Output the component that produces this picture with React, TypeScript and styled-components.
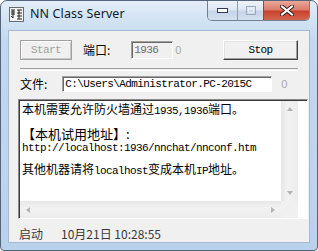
import styled, { createGlobalStyle } from "styled-components";

const Global = createGlobalStyle`
  html, body { margin: 0; padding: 0; background: #ffffff; overflow: hidden; }
  #root { width: 318px; height: 251px; }
`;

const cjk = `"Noto Sans CJK SC", "Noto Sans", sans-serif`;
const mono = `"Liberation Mono", "Noto Sans CJK SC", monospace`;

const Frame = styled.div`
  box-sizing: border-box;
  width: 318px;
  height: 251px;
  border: 1px solid #55657a;
  border-radius: 7px 7px 4px 4px;
  background: linear-gradient(180deg, #e3edf8 0px, #d3e3f3 18px, #c3d8ee 40px, #b9d2eb 100%);
  display: flex;
  flex-direction: column;
  overflow: hidden;
`;

const TitleBar = styled.div`
  height: 29px;
  display: flex;
  align-items: flex-start;
  padding-left: 8px;
`;

const AppIcon = styled.svg`
  margin-top: 6px;
  flex: none;
`;

const Title = styled.div`
  margin-left: 6px;
  margin-top: 5px;
  font-family: "Noto Sans", sans-serif;
  font-size: 12.5px;
  color: #0c1c30;
  line-height: 16px;
  letter-spacing: 0.1px;
`;

const Caption = styled.div`
  margin-left: auto;
  margin-right: 7px;
  display: flex;
  height: 19px;
  border: 1px solid #6f7f94;
  border-top: none;
  border-radius: 0 0 5px 5px;
  overflow: hidden;
`;

const CapBtn = styled.div<{ $w: number; $close?: boolean }>`
  width: ${(p) => p.$w}px;
  height: 19px;
  display: flex;
  align-items: center;
  justify-content: center;
  box-sizing: border-box;
  border-left: ${(p) => (p.$close ? "1px solid #8c4a44" : "1px solid #8d9db1")};
  background: ${(p) =>
    p.$close
      ? "linear-gradient(180deg, #e9a99c 0%, #dd7d6b 45%, #c8432f 55%, #d2664e 100%)"
      : "linear-gradient(180deg, #eef3fa 0%, #dde7f3 45%, #c6d5e7 55%, #d3e0ef 100%)"};
  &:first-child { border-left: none; }
`;

const Client = styled.div`
  flex: 1;
  margin: 0 7px 7px 7px;
  border: 1px solid #a4bad3;
  background: #f0f0f0;
  display: flex;
  flex-direction: column;
  font-family: ${cjk};
  font-size: 12px;
  color: #000;
`;

const Row = styled.div<{ $top: number; $h: number }>`
  display: flex;
  align-items: center;
  margin-top: ${(p) => p.$top}px;
  height: ${(p) => p.$h}px;
  padding: 0 11px;
`;

const Button = styled.div<{ $w: number; $disabled?: boolean }>`
  box-sizing: border-box;
  width: ${(p) => p.$w}px;
  height: 20px;
  display: flex;
  align-items: center;
  justify-content: center;
  font-family: ${mono};
  font-size: 11px;
  letter-spacing: -0.6px;
  background: #f0f0f0;
  color: ${(p) => (p.$disabled ? "#a0a0a0" : "#000")};
  border: 1px solid;
  border-color: ${(p) =>
    p.$disabled ? "#a0a0a0 #a0a0a0 #a0a0a0 #a0a0a0" : "#ffffff #404040 #404040 #ffffff"};
  box-shadow: ${(p) =>
    p.$disabled ? "inset 1px 1px #ffffff, inset -1px -1px #c8c8c8" : "inset -1px -1px #a0a0a0, inset 1px 1px #e3e3e3"};
`;

const Label = styled.span<{ $left?: number }>`
  margin-left: ${(p) => p.$left ?? 0}px;
  line-height: 14px;
`;

const Field = styled.div<{ $w: number; $h: number; $left: number; $disabled?: boolean }>`
  box-sizing: border-box;
  width: ${(p) => p.$w}px;
  height: ${(p) => p.$h}px;
  margin-left: ${(p) => p.$left}px;
  border: 1px solid;
  border-color: #a0a0a0 #ffffff #ffffff #a0a0a0;
  box-shadow: inset 1px 1px #696969;
  background: ${(p) => (p.$disabled ? "#f0f0f0" : "#ffffff")};
  color: ${(p) => (p.$disabled ? "#6d6d6d" : "#000")};
  font-family: ${mono};
  font-size: 11px;
  letter-spacing: -0.6px;
  padding-left: 2px;
  display: flex;
  align-items: center;
  white-space: nowrap;
  overflow: hidden;
`;

const Ghost = styled.span<{ $left: number }>`
  margin-left: ${(p) => p.$left}px;
  color: #a8a8a8;
  font-family: "Liberation Sans", sans-serif;
  font-size: 11px;
`;

const Separator = styled.div`
  margin: 8px 11px 0 11px;
  height: 1px;
  border-top: 1px solid #a0a0a0;
  border-bottom: 1px solid #ffffff;
`;

const LogBox = styled.div`
  margin: 7px 0 0 9px;
  width: 290px;
  height: 120px;
  box-sizing: border-box;
  border: 1px solid;
  border-color: #8a8a8a #ffffff #ffffff #8a8a8a;
  box-shadow: inset 1px 1px #3c3c3c;
  background: #ffffff;
  display: grid;
  grid-template-columns: 1fr 17px 9px;
  grid-template-rows: 1fr 17px;
  padding: 1px 0 0 1px;
`;

const LogText = styled.div`
  padding: 1px 0 0 2px;
  white-space: nowrap;
  min-width: 0;
`;

const Line = styled.div<{ $h: number; $size?: number }>`
  height: ${(p) => p.$h}px;
  line-height: ${(p) => p.$h}px;
  font-size: ${(p) => p.$size ?? 12}px;
`;

const M = styled.span`
  font-family: ${mono};
  font-size: 11px;
  letter-spacing: -0.6px;
`;

const VScroll = styled.div`
  background: linear-gradient(90deg, #e6e6e6, #f2f2f2 40%, #ececec);
  display: flex;
  flex-direction: column;
  justify-content: space-between;
  align-items: center;
  padding: 6px 0 6px;
`;

const HScroll = styled.div`
  grid-column: 1 / 2;
  background: linear-gradient(180deg, #e6e6e6, #f2f2f2 40%, #ececec);
  display: flex;
  justify-content: space-between;
  align-items: center;
  padding: 0 6px;
`;

const Corner = styled.div`
  background: #f0f0f0;
`;

const Arrow = styled.div<{ $dir: "up" | "down" | "left" | "right" }>`
  width: 0;
  height: 0;
  border: 3px solid transparent;
  ${(p) =>
    p.$dir === "up"
      ? "border-bottom: 4px solid #b4b4b4; border-top: none;"
      : p.$dir === "down"
      ? "border-top: 4px solid #b4b4b4; border-bottom: none;"
      : p.$dir === "left"
      ? "border-right: 4px solid #b4b4b4; border-left: none;"
      : "border-left: 4px solid #b4b4b4; border-right: none;"}
`;

const Status = styled.div`
  flex: 1;
  display: flex;
  align-items: center;
  padding: 6px 0 0 10px;
  color: #3a3a3a;
  gap: 18px;
`;

export default function App() {
  return (
    <>
      <Global />
      <Frame>
        <TitleBar>
          <AppIcon width="15" height="15" viewBox="0 0 15 15">
            <rect x="0.5" y="0.5" width="14" height="14" fill="#f4f4f4" stroke="#6a6a6a" />
            <path d="M2 3h4M2 5h4M2 7h4M4 3v8M2 9l2 2M8 3h5M8 6h5M10 3v9M8 9h5M8 12h5" stroke="#222" strokeWidth="1" fill="none" />
          </AppIcon>
          <Title>NN Class Server</Title>
          <Caption>
            <CapBtn $w={29}>
              <svg width="11" height="5" viewBox="0 0 11 5">
                <rect x="0.5" y="0.5" width="10" height="4" fill="#ffffff" stroke="#2e3d52" />
              </svg>
            </CapBtn>
            <CapBtn $w={26}>
              <svg width="10" height="9" viewBox="0 0 10 9">
                <rect x="0.5" y="0.5" width="9" height="8" fill="none" stroke="#9eabbb" />
                <rect x="2.5" y="2.5" width="5" height="4" fill="none" stroke="#e6edf5" />
              </svg>
            </CapBtn>
            <CapBtn $w={46} $close>
              <svg width="14" height="11" viewBox="0 0 14 11">
                <path d="M2 1.5 L12 9.5 M12 1.5 L2 9.5" stroke="#3b1f1a" strokeWidth="4" strokeLinecap="square" />
                <path d="M2 1.5 L12 9.5 M12 1.5 L2 9.5" stroke="#ffffff" strokeWidth="2" strokeLinecap="square" />
              </svg>
            </CapBtn>
          </Caption>
        </TitleBar>
        <Client>
          <Row $top={8} $h={21}>
            <Button $w={52} $disabled>Start</Button>
            <Label $left={11}>端口:</Label>
            <Field $w={42} $h={18} $left={21} $disabled>1936</Field>
            <Ghost $left={2}>0</Ghost>
            <Button $w={75} style={{ marginLeft: "auto" }}>Stop</Button>
          </Row>
          <Separator />
          <Row $top={5} $h={16}>
            <Label>文件:</Label>
            <Field $w={210} $h={16} $left={15}>C:\Users\Administrator.PC-2015C</Field>
            <Ghost $left={9}>0</Ghost>
          </Row>
          <LogBox>
            <LogText>
              <Line $h={13}>本机需要允许防火墙通过<M>1935,1936</M>端口。</Line>
              <Line $h={12} />
              <Line $h={14} $size={13}>【本机试用地址】:</Line>
              <Line $h={10}><M>http://localhost:1936/nnchat/nnconf.htm</M></Line>
              <Line $h={11} />
              <Line $h={13}>其他机器请将<M>localhost</M>变成本机<M>IP</M>地址。</Line>
            </LogText>
            <VScroll>
              <Arrow $dir="up" />
              <Arrow $dir="down" />
            </VScroll>
            <div />
            <HScroll>
              <Arrow $dir="left" />
              <Arrow $dir="right" />
            </HScroll>
            <Corner />
            <div />
          </LogBox>
          <Status>
            <span>启动</span>
            <span>10月21日 10:28:55</span>
          </Status>
        </Client>
      </Frame>
    </>
  );
}
